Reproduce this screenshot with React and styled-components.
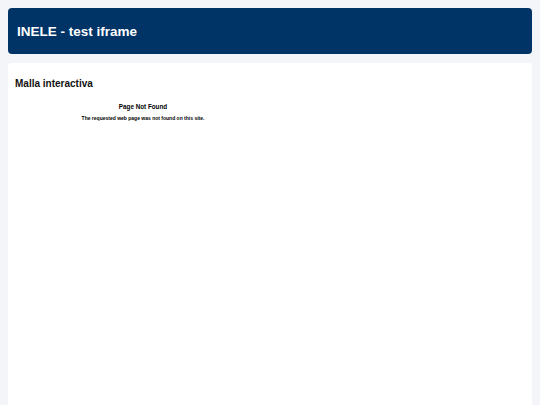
import styled, { createGlobalStyle } from "styled-components";

const GlobalStyle = createGlobalStyle`
  html, body {
    background: #f3f5f9;
  }
  body {
    margin: 8px 8px 0;
    font-family: "Liberation Sans", Arial, sans-serif;
  }
`;

const Page = styled.div`
  display: flex;
  flex-direction: column;
  gap: 9px;
`;

const Header = styled.header`
  height: 46px;
  background: #003366;
  border-radius: 4px;
  display: flex;
  align-items: center;
  padding: 0 9px;
  box-sizing: border-box;

  & h1 {
    margin: 0;
    color: #ffffff;
    font-size: 13.5px;
    font-weight: 700;
  }
`;

const Card = styled.section`
  background: #ffffff;
  border-radius: 3px 3px 0 0;
  height: 342px;
  padding: 15px 7px;
  box-sizing: border-box;
  box-shadow: 0 0 1px rgba(0, 0, 0, 0.06);
`;

const CardTitle = styled.h2`
  margin: 0 0 14px;
  font-size: 10px;
  font-weight: 700;
  color: #111;
`;

const Frame = styled.div`
  width: 256px;
  text-align: center;
  color: #000;
  font-weight: 700;

  & .frame-title {
    font-size: 6.3px;
    margin: 0 0 5px;
  }
  & .frame-text {
    font-size: 5px;
    margin: 0;
  }
`;

export default function App() {
  return (
    <>
      <GlobalStyle />
      <Page>
        <Header>
          <h1>INELE - test iframe</h1>
        </Header>
        <Card>
          <CardTitle>Malla interactiva</CardTitle>
          <Frame>
            <p className="frame-title">Page Not Found</p>
            <p className="frame-text">
              The requested web page was not found on this site.
            </p>
          </Frame>
        </Card>
      </Page>
    </>
  );
}
